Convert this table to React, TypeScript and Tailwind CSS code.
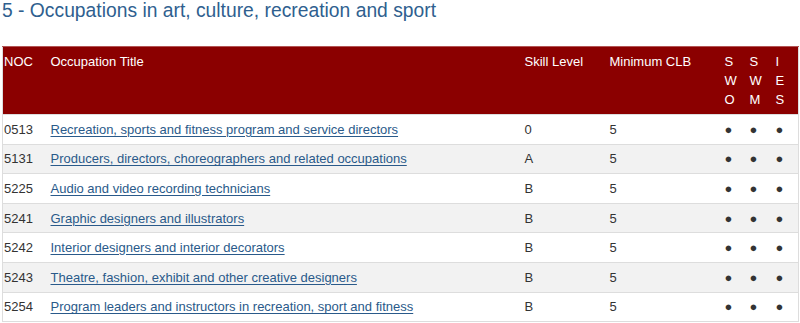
import React from "react";

const rows = [
  ["0513", "Recreation, sports and fitness program and service directors", "0"],
  ["5131", "Producers, directors, choreographers and related occupations", "A"],
  ["5225", "Audio and video recording technicians", "B"],
  ["5241", "Graphic designers and illustrators", "B"],
  ["5242", "Interior designers and interior decorators", "B"],
  ["5243", "Theatre, fashion, exhibit and other creative designers", "B"],
  ["5254", "Program leaders and instructors in recreation, sport and fitness", "B"],
];

export default function App() {
  return (
    <div className="bg-white w-[800px] h-[323px] overflow-hidden px-[2px]" style={{ fontFamily: '"Liberation Sans", Arial, sans-serif' }}>
      <h2 className="text-[19.3px] leading-[22px] text-[#2f5f8f] mb-[24px] font-normal">
        5 - Occupations in art, culture, recreation and sport
      </h2>
      <table className="w-[796px] table-fixed border-collapse text-[13px] text-[#333] border border-[#ddd]">
        <colgroup>
          <col className="w-[47px]" />
          <col className="w-[472px]" />
          <col className="w-[85px]" />
          <col className="w-[115px]" />
          <col className="w-[25px]" />
          <col className="w-[26px]" />
          <col className="w-[26px]" />
        </colgroup>
        <thead>
          <tr className="bg-[#8b0000] text-white align-top border-t border-[#b25555]">
            <th className="font-normal text-left pl-[1px] pt-[5px] pb-[5px] leading-[19px]">NOC</th>
            <th className="font-normal text-left pl-[1px] pt-[5px] pb-[5px] leading-[19px]">Occupation Title</th>
            <th className="font-normal text-left pl-[3px] pt-[5px] pb-[5px] leading-[19px]">Skill Level</th>
            <th className="font-normal text-left pl-[3px] pt-[5px] pb-[5px] leading-[19px]">Minimum CLB</th>
            <th className="font-normal text-left pl-[3px] pt-[5px] pb-[5px] leading-[19px]">S<br />W<br />O</th>
            <th className="font-normal text-left pl-[3px] pt-[5px] pb-[5px] leading-[19px]">S<br />W<br />M</th>
            <th className="font-normal text-left pl-[3px] pt-[5px] pb-[5px] leading-[19px]">I<br />E<br />S</th>
          </tr>
        </thead>
        <tbody>
          {rows.map((r, i) => (
            <tr key={r[0]} className={`border-t border-[#ddd] ${i % 2 === 1 ? "bg-[#f2f2f2]" : "bg-white"}`}>
              <td className="h-[29.6px] pl-[1px] leading-[17px]">{r[0]}</td>
              <td className="pl-[1px] leading-[17px]">
                <a href="#" className="text-[#2a5a8a] underline underline-offset-[2px]">{r[1]}</a>
              </td>
              <td className="pl-[3px] leading-[17px]">{r[2]}</td>
              <td className="pl-[3px] leading-[17px]">5</td>
              <td className="pl-[3px] leading-[17px]">●</td>
              <td className="pl-[3px] leading-[17px]">●</td>
              <td className="pl-[3px] leading-[17px]">●</td>
            </tr>
          ))}
        </tbody>
      </table>
    </div>
  );
}
